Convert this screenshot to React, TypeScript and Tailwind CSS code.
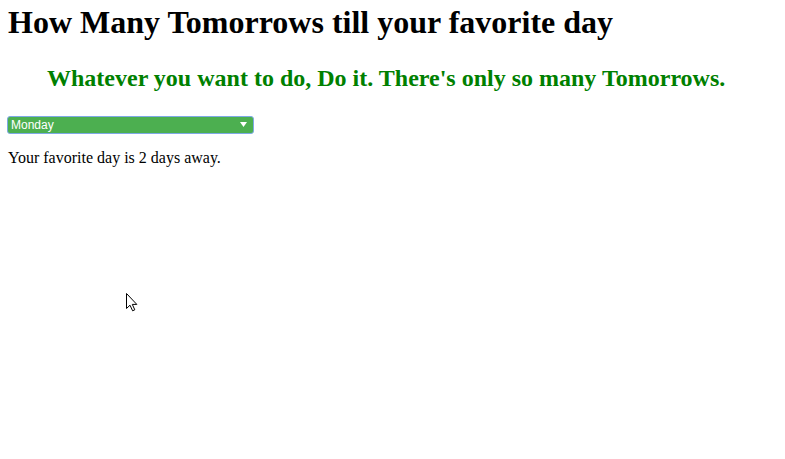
import React from "react";

export default function App() {
  return (
    <div className="relative w-[785px] h-[459px] bg-white overflow-hidden" style={{ fontFamily: '"Liberation Serif", "Times New Roman", serif' }}>
      <div className="flex flex-col pl-[8px] pt-[4px]">
        <h1 className="text-[32px] font-bold leading-[36px] text-black m-0">How Many Tomorrows till your favorite day</h1>
        <h2 className="mt-[25px] ml-[39px] text-[24px] font-bold leading-[27px] text-[#008000]">
          Whatever you want to do, Do it. There's only so many Tomorrows.
        </h2>
        <div
          className="mt-[24px] ml-[-1px] w-[247px] h-[18px] rounded-[3px] border border-[#7ea9e6] bg-[#4caf50] flex items-center justify-between pl-[3px] pr-[6px] text-white text-[12px] leading-[15px]"
          style={{ fontFamily: '"Liberation Sans", Arial, sans-serif' }}
        >
          <span>Monday</span>
          <svg width="7" height="5" viewBox="0 0 7 5" className="mt-[-2px]">
            <polygon points="0,0 7,0 3.5,5" fill="white" />
          </svg>
        </div>
        <p className="mt-[15px] text-[16px] leading-[18px] text-black">Your favorite day is 2 days away.</p>
      </div>
      <svg className="absolute left-[126px] top-[293px]" width="12" height="19" viewBox="0 0 12 19">
        <path d="M0.5 0.5 L0.5 15.5 L4 12.2 L6.6 17.8 L8.8 16.8 L6.3 11.4 L10.8 11.4 Z" fill="white" stroke="black" strokeWidth="1" strokeLinejoin="miter" />
      </svg>
    </div>
  );
}
